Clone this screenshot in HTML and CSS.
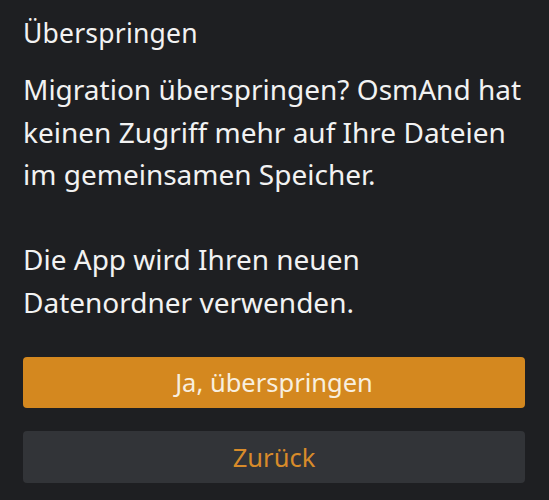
FILE: index.html
```html
<!DOCTYPE html>
<html lang="de">
<head>
    <meta charset="UTF-8">
    <meta name="viewport" content="width=device-width, initial-scale=1.0">
    <title>Überspringen</title>
    <link rel="stylesheet" href="styles.css">
</head>
<body>
    <div class="dialog">
        <h1 class="titel">Überspringen</h1>
        <div class="text">
            <p>Migration überspringen? OsmAnd hat keinen Zugriff mehr auf Ihre Dateien im gemeinsamen Speicher.</p>
            <p>Die App wird Ihren neuen Datenordner verwenden.</p>
        </div>
        <div class="knoepfe">
            <button class="btn btnJa">Ja, überspringen</button>
            <button class="btn btnZurueck">Zurück</button>
        </div>
    </div>
</body>
</html>
```

FILE: styles.css
```css
* {
    padding: 0;
    margin: 0;
    box-sizing: border-box;
}

body {
    background-color: #1e1f22;
    font-family: "Noto Sans", "Open Sans", sans-serif;
    color: #f2f2f2;
}

.dialog {
    padding: 16px 24px 0 23px;
}

.titel {
    font-size: 26.5px;
    font-weight: normal;
    line-height: 34px;
    letter-spacing: 0.2px;
}

.text {
    margin-top: 18px;
    margin-right: -4px;
    font-size: 28px;
    line-height: 42.5px;
}

.text p {
    margin-bottom: 42.5px;
}

.text p:last-child {
    margin-bottom: 0;
}

.knoepfe {
    display: flex;
    flex-direction: column;
    gap: 23px;
    margin-top: 33.5px;
}

.btn {
    height: 51px;
    border: none;
    border-radius: 4px;
    font-family: inherit;
    font-size: 25.5px;
}

.btnJa {
    background-color: #d4881f;
    color: #f8efdf;
}

.btnZurueck {
    height: 52px;
    background-color: #323438;
    color: #d88b2a;
}
```
